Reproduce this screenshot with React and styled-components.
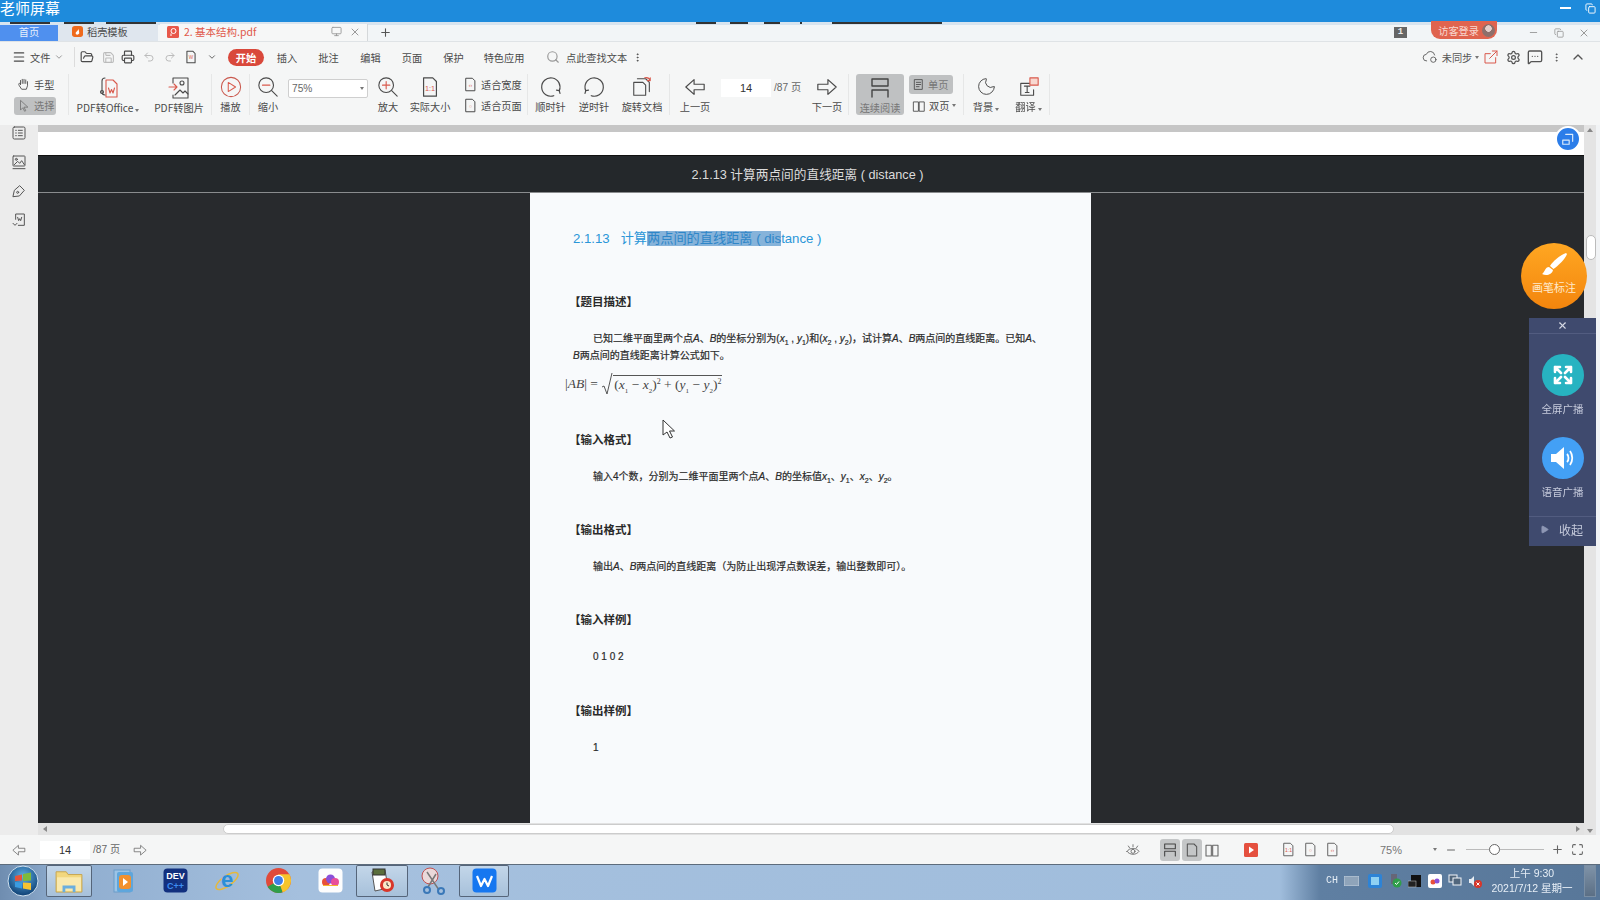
import React from 'react';
import styled, { createGlobalStyle } from 'styled-components';
import {
  Menu, ChevronDown, ChevronUp, FolderOpen, Save, Printer, Undo2, Redo2, Search, Settings,
  MessageSquareMore, MoreVertical, X, Plus, Minus, Monitor, Moon, Play, Maximize, Copy,
} from 'lucide-react';

const GlobalStyle = createGlobalStyle`
  html, body { margin: 0; padding: 0; background: #fff; overflow: hidden; }
  * { box-sizing: border-box; }
`;

const UI_FONT = `"Noto Sans CJK SC", "Liberation Sans", sans-serif`;
const DOC_FONT = `"Liberation Sans", "Noto Sans CJK SC", sans-serif`;

const Root = styled.div`
  position: relative;
  width: 1600px;
  height: 900px;
  overflow: hidden;
  display: flex;
  flex-direction: column;
  font-family: ${UI_FONT};
  color: #4a4a4a;
  font-size: 10.2px;
  filter: blur(0.35px);
`;

const TopBar = styled.div`
  height: 22px;
  background: #1e8bdc;
  color: #fff;
  font-size: 15px;
  line-height: 16px;
  display: flex;
  justify-content: space-between;
  align-items: flex-start;
  padding-right: 4px;
`;

const TopButtons = styled.div`
  display: flex;
  gap: 14px;
  align-items: center;
  height: 16px;
`;

const WinBar = styled.div`
  width: 11px;
  height: 2px;
  background: #fff;
`;

const Strip = styled.div`
  height: 3px;
  background: #d8e4ef;
  display: flex;
`;

const Mark = styled.span`
  margin-left: ${(p) => p.$at}px;
  width: ${(p) => p.$w}px;
  height: 2px;
  background: #333;
`;

const TabRow = styled.div`
  height: 17px;
  background: #f2f5f7;
  border-bottom: 1px solid #dfe3e6;
  display: flex;
  align-items: stretch;
`;

const HomeTab = styled.div`
  width: 58px;
  background: #4f90ef;
  color: #e6effc;
  display: flex;
  align-items: center;
  justify-content: center;
  padding-bottom: 3px;
`;

const TemplateTab = styled.div`
  width: 100px;
  background: #dfe6ee;
  display: flex;
  align-items: center;
  gap: 4px;
  padding: 0 0 3px 14px;
`;

const ActiveTab = styled.div`
  width: 208px;
  margin-left: 2px;
  background: #f6f7f7;
  border-right: 1px solid #d5d8da;
  color: #e0584a;
  display: flex;
  align-items: center;
  padding: 0 6px 2px 7px;
  gap: 5px;
  font-size: 10.5px;
  margin-top: -1px;
`;

const TabIcons = styled.div`
  margin-left: auto;
  display: flex;
  gap: 7px;
  color: #999;
`;

const NewTab = styled.div`
  margin-left: 11px;
  display: flex;
  align-items: center;
  color: #555;
  padding-bottom: 2px;
`;

const TabRight = styled.div`
  margin-left: auto;
  display: flex;
  align-items: center;
  padding-bottom: 1px;
  color: #999;
`;

const CountBadge = styled.span`
  width: 13px;
  height: 11px;
  background: #666;
  color: #eee;
  font: bold 9px/11px "Liberation Mono", monospace;
  text-align: center;
  margin-right: 24px;
`;

const LoginPill = styled.div`
  width: 66px;
  height: 18px;
  margin-top: -5px;
  border-radius: 0 0 9px 9px;
  background: #e0644f;
  color: #f8d8d0;
  display: flex;
  align-items: center;
  justify-content: flex-end;
  gap: 3px;
  padding-right: 2px;
  margin-right: 24px;
`;

const Avatar = styled.span`
  width: 13px;
  height: 13px;
  border-radius: 50%;
  background: radial-gradient(circle at 50% 35%, #e6cfcb 0 3px, #8d6f6b 3.5px);
`;

const WinCtl = styled.span`
  width: ${(p) => p.$w || 25}px;
  display: flex;
  justify-content: center;
`;

const MenuRow = styled.div`
  height: 30px;
  background: #f5f6f6;
  display: flex;
  align-items: center;
  padding-left: 12px;
  padding-right: 10px;
  color: #4a4a4a;
`;

const MenuSlot = styled.div`
  width: ${(p) => p.$w}px;
  flex: none;
  display: flex;
  align-items: center;
  justify-content: ${(p) => p.$start ? 'flex-start' : 'center'};
  gap: ${(p) => p.$gap || 0}px;
  margin-left: ${(p) => p.$ml || 0}px;
  color: ${(p) => p.$muted ? '#bbb' : 'inherit'};
  white-space: nowrap;
`;

const VLine = styled.div`
  width: 1px;
  height: ${(p) => p.$h || 20}px;
  background: #dcdcdc;
  flex: none;
`;

const StartPill = styled.div`
  width: 36px;
  height: 17px;
  background: #d9483b;
  color: #fff;
  border-radius: 9px;
  font-weight: 700;
  display: flex;
  align-items: center;
  justify-content: center;
  flex: none;
  margin: 0 3px 0 5px;
`;

const MenuRight = styled.div`
  margin-left: auto;
  display: flex;
  align-items: center;
  color: #555;
`;

const Toolbar = styled.div`
  height: 53px;
  background: #f5f6f6;
  display: flex;
  align-items: stretch;
  padding: 2px 0 10px;
`;

const Sep = styled.div`
  width: 1px;
  background: #e6e7e7;
  flex: none;
  margin-left: ${(p) => p.$ml || 0}px;
`;

const HandGroup = styled.div`
  width: 68px;
  padding: 1px 0 0 14px;
  display: flex;
  flex-direction: column;
  gap: 3px;
`;

const SmallTool = styled.div`
  width: ${(p) => p.$w || 42}px;
  height: 19px;
  display: flex;
  align-items: center;
  gap: 3px;
  padding-left: 3px;
  border-radius: 3px;
  white-space: nowrap;
  background: ${(p) => p.$on ? '#bfc1c2' : 'transparent'};
  color: ${(p) => p.$on ? '#777' : 'inherit'};
`;

const Tool = styled.div`
  width: ${(p) => p.$w}px;
  flex: none;
  display: flex;
  flex-direction: column;
  align-items: center;
  justify-content: space-between;
  padding: 2px 0 1px;
  white-space: nowrap;
  border-radius: 3px;
  background: ${(p) => p.$on ? '#bfc1c2' : 'transparent'};
  color: ${(p) => p.$on ? '#777' : 'inherit'};
  margin-left: ${(p) => p.$ml || 0}px;
`;

const ZoomSelect = styled.div`
  width: 80px;
  height: 19px;
  margin: 5px 2px 0 2px;
  background: #fff;
  border: 1px solid #cfcfcf;
  border-radius: 2px;
  display: flex;
  align-items: center;
  justify-content: space-between;
  padding: 0 3px;
  font-family: "Liberation Sans", sans-serif;
  flex: none;
  color: #666;
`;

const Caret = styled.span`
  width: 0;
  height: 0;
  border-left: 2.5px solid transparent;
  border-right: 2.5px solid transparent;
  border-top: 3px solid #777;
  display: inline-block;
  margin-left: ${(p) => p.$ml || 0}px;
`;

const FitGroup = styled.div`
  width: 73px;
  flex: none;
  padding: 1px 0 0 6px;
  display: flex;
  flex-direction: column;
  gap: 2px;
`;

const PageBox = styled.div`
  width: 88px;
  padding: 5px 0 0 3px;
  display: flex;
  gap: 3px;
  flex: none;
  align-items: flex-start;
`;

const StatusPageBox = styled(PageBox)`
  width: 84px;
  padding: 0 0 0 2px;
`;

const PageInput = styled.div`
  width: ${(p) => p.$w || 50}px;
  height: 18px;
  background: #fff;
  color: #333;
  font: 11px/18px "Liberation Sans", sans-serif;
  text-align: center;
  flex: none;
`;

const PageTotal = styled.span`
  font-family: "Liberation Sans", "Noto Sans CJK SC", sans-serif;
  line-height: 18px;
  color: #666;
  white-space: nowrap;
`;

const ViewStack = styled.div`
  width: 44px;
  margin-left: 5px;
  display: flex;
  flex-direction: column;
  gap: 2px;
  padding-top: 1px;
  flex: none;
`;

const Viewer = styled.div`
  height: 710px;
  display: flex;
`;

const SideRail = styled.div`
  width: 38px;
  background: #ececec;
  display: flex;
  flex-direction: column;
  align-items: center;
  gap: 13px;
  color: #555;
  flex: none;
`;

const ViewerMain = styled.div`
  flex: 1;
  display: flex;
  flex-direction: column;
  min-width: 0;
`;

const GrayEdge = styled.div`
  height: 7px;
  background: #c6c6c6;
  flex: none;
`;

const WhiteGap = styled.div`
  height: 23px;
  background: #fff;
  flex: none;
`;

const PageHeader = styled.div`
  height: 38px;
  background: #24282b;
  border-top: 1px solid #111;
  border-bottom: 1px solid #8a8c8e;
  color: #dcdcdc;
  font: 12.7px/38px ${DOC_FONT};
  text-align: center;
  flex: none;
  padding-right: 7px;
`;

const PageArea = styled.div`
  flex: 1;
  min-height: 0;
  background: #282a2d;
  display: flex;
  justify-content: center;
  padding-right: 1px;
`;

const PaperSheet = styled.div`
  position: relative;
  width: 561px;
  background: #f8fafc;
  padding: 37px 0 0 43px;
  font: 10px/17px ${DOC_FONT};
  color: #2a2a2a;
`;

const DocTitle = styled.div`
  color: #2a96d8;
  font-size: 13.2px;
  line-height: 18px;
`;

const Selected = styled.span`
  background: rgba(40, 120, 190, 0.55);
  color: #2f86c8;
`;

const DocHeading = styled.div`
  font-weight: 700;
  margin-top: ${(p) => p.$mt}px;
  margin-left: -4px;
  font-size: 11.5px;
`;

const DocPara = styled.div`
  margin-top: ${(p) => p.$mt}px;
  padding-left: ${(p) => p.$indent ? 20 : 0}px;
  -webkit-text-stroke: 0.2px #2a2a2a;
  white-space: nowrap;
`;

const DocFirstLine = styled.span`
  display: inline-block;
  padding-left: 20px;
`;

const Formula = styled.div`
  display: flex;
  align-items: center;
  margin: 6px 0 0 -8px;
  height: 28px;
  font: 13.5px "Liberation Serif", serif;
  color: #444;
  white-space: nowrap;
`;

const Radicand = styled.span`
  border-top: 1px solid #555;
  padding: 1px 1px 0 1px;
  margin-top: -1px;
`;

const Sub = styled.sub`
  font-size: 7px;
  line-height: 0;
`;

const Sup = styled.sup`
  font-size: 8px;
  line-height: 0;
`;

const CursorMark = styled.svg`
  position: absolute;
  left: 132px;
  top: 226px;
`;

const VScroll = styled.div`
  width: 16px;
  background: #e4e4e4;
  border-right: 4px solid #f1f3f5;
  flex: none;
  position: relative;
  display: flex;
  flex-direction: column;
  align-items: center;
  justify-content: space-between;
  padding: 3px 0 2px;
`;

const VThumb = styled.div`
  position: absolute;
  left: 2px;
  top: 110px;
  width: 10px;
  height: 25px;
  background: #fff;
  border: 1px solid #bbb;
  border-radius: 5px;
`;

const HScroll = styled.div`
  height: 12px;
  background: #e2e2e2;
  flex: none;
  display: flex;
  align-items: center;
  padding: 0 4px 0 5px;
`;

const HThumb = styled.div`
  width: 1171px;
  height: 10px;
  margin-left: 176px;
  background: #fff;
  border: 1px solid #ccc;
  border-radius: 5px;
`;

const TinyArrow = styled.span`
  width: 0;
  height: 0;
  border-top: 3px solid transparent;
  border-bottom: 3px solid transparent;
  border-${(p) => p.$left ? 'right' : 'left'}: 4px solid #888;
  margin-left: ${(p) => p.$right ? 'auto' : '0'};
`;

const TinyUp = styled.span`
  width: 0;
  height: 0;
  border-left: 3px solid transparent;
  border-right: 3px solid transparent;
  ${(p) => p.$down ? 'border-top' : 'border-bottom'}: 4px solid #888;
`;

const StatusBar = styled.div`
  height: 29px;
  background: #f5f6f6;
  display: flex;
  align-items: center;
  padding-right: 16px;
  color: #666;
`;

const StatusSlot = styled.div`
  width: ${(p) => p.$w}px;
  flex: none;
  height: 22px;
  border-radius: 3px;
  display: flex;
  align-items: center;
  justify-content: center;
  margin-left: ${(p) => p.$ml || 0}px;
  background: ${(p) => p.$on ? '#c4c6c7' : 'transparent'};
`;

const StatusSpacer = styled.div`
  flex: 1;
`;

const ZoomText = styled.div`
  width: 70px;
  flex: none;
  margin-left: 13px;
  text-align: center;
  font: 11px "Liberation Sans", sans-serif;
  color: #777;
`;

const ZoomTrack = styled.div`
  position: relative;
  width: 78px;
  height: 1px;
  margin-left: 9px;
  background: #bbb;
  flex: none;
`;

const ZoomKnob = styled.span`
  position: absolute;
  left: 23px;
  top: -5px;
  width: 11px;
  height: 11px;
  border-radius: 50%;
  background: #fff;
  border: 1px solid #666;
`;

const Taskbar = styled.div`
  height: 36px;
  border-top: 1px solid #5d6c7c;
  background: linear-gradient(90deg, #6f8db0 0, #8fadcf 60px, #a5c0de 300px, #a0bddc 1280px, #5f7fa2 1320px, #587799 1600px);
  display: flex;
  align-items: center;
  padding-bottom: 4px;
  color: #e6eef6;
`;

const Orb = styled.div`
  width: 46px;
  flex: none;
  display: flex;
  justify-content: center;
`;

const TaskSlot = styled.div`
  width: ${(p) => p.$w || 51.6}px;
  height: 32px;
  flex: none;
  display: flex;
  align-items: center;
  justify-content: center;
  margin-left: ${(p) => p.$ml || 0}px;
  border-radius: 2px;
  background: ${(p) => p.$open ? 'linear-gradient(#c4d7ea, #a6c0da)' : 'transparent'};
  box-shadow: ${(p) => p.$open ? 'inset 0 0 0 1px #55657a' : 'none'};
`;

const Tray = styled.div`
  margin-left: auto;
  display: flex;
  align-items: center;
  gap: 6px;
`;

const ImeLabel = styled.span`
  font: 10px "Liberation Mono", monospace;
`;

const Clock = styled.div`
  width: 88px;
  text-align: center;
  font: 10.5px/15px ${DOC_FONT};
  color: #e6eef6;
  white-space: nowrap;
`;

const ShowDesktop = styled.div`
  width: 12px;
  height: 32px;
  margin: 0 4px 0 2px;
  border: 1px solid #7a8ea3;
  background: linear-gradient(#7f93a8, #5b6f85);
`;

const SwitchBadge = styled.div`
  position: absolute;
  left: 1555px;
  top: 126px;
  width: 26px;
  height: 26px;
  border-radius: 50%;
  background: #2b7de9;
  border: 2px solid #fff;
  display: flex;
  align-items: center;
  justify-content: center;
`;

const BrushButton = styled.div`
  position: absolute;
  left: 1521px;
  top: 243px;
  width: 66px;
  height: 66px;
  border-radius: 50%;
  background: linear-gradient(#ffa722, #f3850d);
  color: #ffe9cc;
  font-size: 11px;
  display: flex;
  flex-direction: column;
  align-items: center;
  padding-top: 9px;
  gap: 1px;
`;

const BroadcastPanel = styled.div`
  position: absolute;
  left: 1529px;
  top: 318px;
  width: 67px;
  height: 228px;
  background: #3f4a6e;
  color: #c6cbdc;
  font-size: 10.5px;
  display: flex;
  flex-direction: column;
  align-items: center;
`;

const PanelClose = styled.div`
  height: 16px;
  width: 100%;
  display: flex;
  align-items: center;
  justify-content: center;
  border-bottom: 1px solid #525c80;
  color: #d6d9e4;
`;

const RoundAction = styled.div`
  width: 42px;
  height: 42px;
  border-radius: 50%;
  background: ${(p) => p.$color};
  margin-top: ${(p) => p.$mt}px;
  display: flex;
  align-items: center;
  justify-content: center;
`;

const ActionLabel = styled.div`
  margin-top: 5px;
  line-height: 16px;
`;

const PanelFold = styled.div`
  margin-top: auto;
  width: 100%;
  height: 30px;
  border-top: 1px solid #525c80;
  display: flex;
  align-items: center;
  gap: 10px;
  padding: 0 0 4px 11px;
  font-size: 12px;
`;

// line icon drawn on a 24 grid, scaled by size
const Ico = ({ size = 20, sw = 1.5, children, color = 'currentColor' }) => (
  <svg width={size} height={size} viewBox="0 0 24 24" fill="none" stroke={color} strokeWidth={sw} strokeLinejoin="round" strokeLinecap="round" style={{ flex: 'none' }}>
    {children}
  </svg>
);

const ArrowOutline = ({ dir, size = 22 }) => (
  <Ico size={size} sw={1.3}>
    <path d={dir === 'left' ? 'M2 12 11 4v5h11v6H11v5z' : 'M22 12 13 4v5H2v6h11v5z'} />
  </Ico>
);

const RotateIcon = ({ ccw }) => (
  <Ico size={22} sw={1.3}>
    <g transform={ccw ? 'matrix(-1 0 0 1 24 0)' : undefined}>
      <path d="M15 21.5A10 10 0 1 1 21 16" />
      <path d="M18 15.5l3 .5.8 3" />
    </g>
  </Ico>
);

const DocIcon = ({ label, size = 20, accent = '#d9594c', sw = 1.3 }) => (
  <Ico size={size} sw={sw}>
    <path d="M5 2h10l4 4v16H5z" />
    <text x="12" y="16" fontSize="8" fill={accent} stroke="none" textAnchor="middle" fontFamily="Liberation Sans">{label}</text>
  </Ico>
);

const LogoSquare = ({ bg, children }) => (
  <svg width="25" height="25" viewBox="0 0 25 25">
    <rect x="0.5" y="0.5" width="24" height="24" rx="4" fill={bg} />
    {children}
  </svg>
);

const ViewerIcons = () => (
  <SideRail>
    <Ico size={16} sw={1.5}><rect x="3" y="3" width="18" height="18" rx="2" /><path d="M7 8h1M11 8h6M7 12h1M11 12h6M7 16h1M11 16h6" /></Ico>
    <Ico size={16} sw={1.5}><rect x="3" y="3" width="18" height="15" rx="1" /><path d="M5 16l5-5 3 3 3-4 4 6M3 22h18" /><circle cx="8" cy="8" r="1.5" /></Ico>
    <Ico size={16} sw={1.5}><path d="M3 20l2-9 8-7 7 7-7 8z" /><circle cx="10" cy="14" r="1.5" /></Ico>
    <Ico size={16} sw={1.5}><path d="M7 11V3h13v17H11" /><path d="M3 17l3 3 3-3" /><path d="M10 8l1.5 5L13 10l1.5 3L16 8" /></Ico>
  </SideRail>
);

const Paper = () => (
  <PaperSheet>
    <DocTitle>
      2.1.13&nbsp;&nbsp;&nbsp;计算<Selected>两点间的直线距离 ( dis</Selected>tance )
    </DocTitle>
    <DocHeading $mt={46}>【题目描述】</DocHeading>
    <DocPara $mt={19}>
      <DocFirstLine>
        已知二维平面里两个点<i>A</i>、<i>B</i>的坐标分别为(<i>x</i><Sub>1</Sub> , <i>y</i><Sub>1</Sub>)和(<i>x</i><Sub>2</Sub> , <i>y</i><Sub>2</Sub>)，试计算<i>A</i>、<i>B</i>两点间的直线距离。已知<i>A</i>、
      </DocFirstLine>
      <br />
      <i>B</i>两点间的直线距离计算公式如下。
    </DocPara>
    <Formula>
      |<i>AB</i>| =&nbsp;
      <svg width="12" height="24" viewBox="0 0 12 24" fill="none" stroke="#555"><path d="M1 15l2-1 3 8 5-21" /></svg>
      <Radicand>
        (<i>x</i><Sub>1</Sub> − <i>x</i><Sub>2</Sub>)<Sup>2</Sup> + (<i>y</i><Sub>1</Sub> − <i>y</i><Sub>2</Sub>)<Sup>2</Sup>
      </Radicand>
    </Formula>
    <DocHeading $mt={34}>【输入格式】</DocHeading>
    <DocPara $mt={19} $indent>
      输入4个数，分别为二维平面里两个点<i>A</i>、<i>B</i>的坐标值<i>x</i><Sub>1</Sub>、<i>y</i><Sub>1</Sub>、<i>x</i><Sub>2</Sub>、<i>y</i><Sub>2</Sub>。
    </DocPara>
    <DocHeading $mt={37}>【输出格式】</DocHeading>
    <DocPara $mt={19} $indent>
      输出<i>A</i>、<i>B</i>两点间的直线距离（为防止出现浮点数误差，输出整数即可）。
    </DocPara>
    <DocHeading $mt={37}>【输入样例】</DocHeading>
    <DocPara $mt={19} $indent>0 1 0 2</DocPara>
    <DocHeading $mt={38}>【输出样例】</DocHeading>
    <DocPara $mt={19} $indent>1</DocPara>
    <CursorMark width="14" height="20" viewBox="0 0 14 20">
      <path d="M1 1v15l4-3 3 6 2.500-1-3-6h5z" fill="#fff" stroke="#333" strokeWidth="1" strokeLinejoin="round" />
    </CursorMark>
  </PaperSheet>
);

const App = () => (
  <>
    <GlobalStyle />
    <Root>
      <TopBar>
        <span>老师屏幕</span>
        <TopButtons>
          <WinBar />
          <Copy size={11} color="#fff" strokeWidth={2} />
        </TopButtons>
      </TopBar>
      <Strip>
        <Mark $at={10} $w={40} />
        <Mark $at={14} $w={30} />
        <Mark $at={12} $w={50} />
        <Mark $at={540} $w={20} />
        <Mark $at={14} $w={18} />
        <Mark $at={16} $w={16} />
        <Mark $at={20} $w={2} />
        <Mark $at={30} $w={110} />
      </Strip>
      <TabRow>
        <HomeTab>首页</HomeTab>
        <TemplateTab>
          <svg width="11" height="11" viewBox="0 0 12 12"><rect width="12" height="12" rx="3" fill="#ef6a1c" /><path d="M7 2C8 5 4 6 4 8c0 2 3 2 4 0" fill="#fff" /></svg>
          稻壳模板
        </TemplateTab>
        <ActiveTab>
          <svg width="12" height="12" viewBox="0 0 12 12"><rect width="12" height="12" rx="1.500" fill="#e8584a" /><circle cx="6.500" cy="5" r="2.500" fill="none" stroke="#fff" /><path d="M4 7.500V10" stroke="#fff" /></svg>
          2. 基本结构.pdf
          <TabIcons>
            <Monitor size={11} />
            <X size={12} />
          </TabIcons>
        </ActiveTab>
        <NewTab><Plus size={13} /></NewTab>
        <TabRight>
          <CountBadge>1</CountBadge>
          <LoginPill>访客登录<Avatar /></LoginPill>
          <WinCtl><Minus size={11} /></WinCtl>
          <WinCtl><Copy size={10} /></WinCtl>
          <WinCtl><X size={12} /></WinCtl>
          <WinCtl $w={4} />
        </TabRight>
      </TabRow>
      <MenuRow>
        <MenuSlot $w={18} $start><Menu size={14} /></MenuSlot>
        <MenuSlot $w={44} $start $gap={4}>文件<ChevronDown size={10} color="#888" /></MenuSlot>
        <VLine />
        <MenuSlot $w={24}><FolderOpen size={14} /></MenuSlot>
        <MenuSlot $w={18} $muted><Save size={13} /></MenuSlot>
        <MenuSlot $w={22}><Printer size={14} /></MenuSlot>
        <MenuSlot $w={20} $muted><Undo2 size={12} /></MenuSlot>
        <MenuSlot $w={22} $muted><Redo2 size={12} /></MenuSlot>
        <MenuSlot $w={20}><DocIcon label="W" size={14} sw={1.8} /></MenuSlot>
        <MenuSlot $w={22}><ChevronDown size={10} /></MenuSlot>
        <StartPill>开始</StartPill>
        <MenuSlot $w={40}>插入</MenuSlot>
        <MenuSlot $w={43}>批注</MenuSlot>
        <MenuSlot $w={41}>编辑</MenuSlot>
        <MenuSlot $w={42}>页面</MenuSlot>
        <MenuSlot $w={41}>保护</MenuSlot>
        <MenuSlot $w={60}>特色应用</MenuSlot>
        <MenuSlot $w={26} $ml={6}><Search size={14} color="#999" /></MenuSlot>
        <MenuSlot $w={66} $start>点此查找文本</MenuSlot>
        <MoreVertical size={11} />
        <MenuRight>
          <MenuSlot $w={20}>
            <Ico size={16} sw={1.3}><path d="M7 18a5 5 0 0 1-.5-10A6.500 6.500 0 0 1 19 9" /><circle cx="17" cy="16" r="4" /></Ico>
          </MenuSlot>
          <MenuSlot $w={34}>未同步</MenuSlot>
          <MenuSlot $w={6}><Caret /></MenuSlot>
          <MenuSlot $w={22}>
            <Ico size={16} sw={1.5} color="#d9594c"><path d="M19 13v8H3V7h8M14 3h7v7M21 3L10 14" /></Ico>
          </MenuSlot>
          <MenuSlot $w={22}><Settings size={15} /></MenuSlot>
          <MenuSlot $w={22}><MessageSquareMore size={16} /></MenuSlot>
          <MenuSlot $w={20}><MoreVertical size={11} /></MenuSlot>
          <MenuSlot $w={24}><ChevronUp size={16} /></MenuSlot>
        </MenuRight>
      </MenuRow>
      <Toolbar>
        <HandGroup>
          <SmallTool>
            <Ico size={14}><path d="M6 13V6M9 11V4M12 11V4M15 11V5M18 14V8M6 12c-3-3-4 0-2 3l4 6h8l2-6" /></Ico>
            手型
          </SmallTool>
          <SmallTool $on>
            <Ico size={14}><path d="M6 3v16l4-4 3 6 2-1-3-6h6z" /></Ico>
            选择
          </SmallTool>
        </HandGroup>
        <Sep />
        <Tool $w={78}>
          <Ico size={24} sw={1.1}><path d="M10 4h7l4 4v13H10z" stroke="#d9594c" /><path d="M12.500 12l1.500 5 1.500-3.500L17 17l1.500-5" stroke="#d9594c" /><path d="M9 2a3 3 0 0 0-3 3v11a3 3 0 0 0 3 3" /><circle cx="6" cy="16" r="1.500" /></Ico>
          <span>PDF转Office<Caret $ml={2} /></span>
        </Tool>
        <Tool $w={64}>
          <Ico size={24} sw={1.1}><path d="M6 7V2h15v20H6v-3" /><path d="M2 11h8M7 8l3 3-3 3" stroke="#d9594c" /><path d="M8 19l5-5 3 3 2-2 3 3" /><circle cx="15" cy="7" r="2" /></Ico>
          <span>PDF转图片</span>
        </Tool>
        <Sep />
        <Tool $w={37}>
          <Ico size={22} sw={1.1}><circle cx="12" cy="12" r="10.500" stroke="#c9574c" /><path d="M9 7l8 5-8 5z" stroke="#d9594c" /></Ico>
          <span>播放</span>
        </Tool>
        <Sep />
        <Tool $w={36}>
          <Ico size={22} sw={1.2}><circle cx="10" cy="10" r="8" /><path d="M16 16l6 6" /><path d="M6 10h8" stroke="#d9594c" /></Ico>
          <span>缩小</span>
        </Tool>
        <ZoomSelect><span>75%</span><Caret /></ZoomSelect>
        <Tool $w={36}>
          <Ico size={22} sw={1.2}><circle cx="10" cy="10" r="8" /><path d="M16 16l6 6" /><path d="M6 10h8M10 6v8" stroke="#d9594c" /></Ico>
          <span>放大</span>
        </Tool>
        <Tool $w={48}>
          <DocIcon label="1:1" size={22} />
          <span>实际大小</span>
        </Tool>
        <FitGroup>
          <SmallTool $w={62}><DocIcon label="‹›" size={15} sw={1.6} />适合宽度</SmallTool>
          <SmallTool $w={62}><DocIcon label="○" size={15} sw={1.6} />适合页面</SmallTool>
        </FitGroup>
        <Sep />
        <Tool $w={45}>
          <RotateIcon />
          <span>顺时针</span>
        </Tool>
        <Tool $w={42}>
          <RotateIcon ccw />
          <span>逆时针</span>
        </Tool>
        <Tool $w={54}>
          <Ico size={22} sw={1.2}><path d="M3 7h10l3 3v11H3z" /><path d="M7 3h9l4 4v10" /><path d="M15 2a5 5 0 0 1 6 3M21 2v3h-3" stroke="#d9594c" /></Ico>
          <span>旋转文档</span>
        </Tool>
        <Sep />
        <Tool $w={46} $ml={2}>
          <ArrowOutline dir="left" />
          <span>上一页</span>
        </Tool>
        <PageBox>
          <PageInput>14</PageInput>
          <PageTotal>/87 页</PageTotal>
        </PageBox>
        <Tool $w={42}>
          <ArrowOutline dir="right" />
          <span>下一页</span>
        </Tool>
        <Sep />
        <Tool $w={48} $on $ml={7}>
          <Ico size={24} sw={1.4} color="#444"><path d="M4 3h16v7H4zM4 21v-7h16v7" /></Ico>
          <span>连续阅读</span>
        </Tool>
        <ViewStack>
          <SmallTool $w={44} $on>
            <Ico size={13} color="#444"><path d="M5 3h14v18H5zM8 8h8M8 12h8M8 16h5" /></Ico>
            单页
          </SmallTool>
          <SmallTool $w={48}>
            <Ico size={14}><path d="M3 5h8v16H3zM13 5h8v16h-8z" /></Ico>
            双页<Caret />
          </SmallTool>
        </ViewStack>
        <Sep $ml={10} />
        <Tool $w={44}>
          <Moon size={21} strokeWidth={1.1} />
          <span>背景<Caret $ml={2} /></span>
        </Tool>
        <Tool $w={41}>
          <Ico size={22} sw={1.2}><path d="M15 8H3v13h14v-6" /><path d="M7 11h6M10 11v7M8 18h4" /><rect x="13" y="2" width="9" height="8" stroke="#d9594c" fill="#f8d8d0" /></Ico>
          <span>翻译<Caret $ml={2} /></span>
        </Tool>
        <Sep />
      </Toolbar>
      <Viewer>
        <ViewerIcons />
        <ViewerMain>
          <GrayEdge />
          <WhiteGap />
          <PageHeader>2.1.13 计算两点间的直线距离 ( distance )</PageHeader>
          <PageArea>
            <Paper />
          </PageArea>
          <HScroll>
            <TinyArrow $left />
            <HThumb />
            <TinyArrow $right />
          </HScroll>
        </ViewerMain>
        <VScroll>
          <TinyUp />
          <VThumb />
          <TinyUp $down />
        </VScroll>
      </Viewer>
      <StatusBar>
        <StatusSlot $w={38}><ArrowOutline dir="left" size={14} /></StatusSlot>
        <StatusPageBox>
          <PageInput>14</PageInput>
          <PageTotal>/87 页</PageTotal>
        </StatusPageBox>
        <StatusSlot $w={36}><ArrowOutline dir="right" size={14} /></StatusSlot>
        <StatusSpacer />
        <StatusSlot $w={29}>
          <Ico size={16} sw={1.3}><path d="M3 14c4-6 14-6 18 0-4 6-14 6-18 0z" /><circle cx="12" cy="14" r="3" /><path d="M5 6l2 3M19 6l-2 3M12 4v3" /></Ico>
        </StatusSlot>
        <StatusSlot $w={20} $on $ml={13}><Ico size={16} sw={1.6} color="#444"><path d="M4 3h16v7H4zM4 21v-7h16v7" /></Ico></StatusSlot>
        <StatusSlot $w={20} $on $ml={2}><Ico size={16} sw={1.6} color="#555"><path d="M5 3h10l4 4v14H5z" /></Ico></StatusSlot>
        <StatusSlot $w={20}><Ico size={16} sw={1.6}><path d="M3 5h8v16H3zM13 5h8v16h-8z" /></Ico></StatusSlot>
        <StatusSlot $w={38} $ml={10}>
          <svg width="14" height="14" viewBox="0 0 14 14"><rect width="14" height="14" rx="1.500" fill="#e5503f" /><path d="M5 3.500l5 3.500-5 3.500z" fill="#fff" /></svg>
        </StatusSlot>
        <StatusSlot $w={22} $ml={7}><DocIcon label="1:1" size={15} sw={1.6} /></StatusSlot>
        <StatusSlot $w={22}><DocIcon label="○" size={15} sw={1.6} /></StatusSlot>
        <StatusSlot $w={22}><DocIcon label="‹›" size={15} sw={1.6} /></StatusSlot>
        <ZoomText>75%</ZoomText>
        <StatusSlot $w={20} $ml={-1}><Caret /></StatusSlot>
        <StatusSlot $w={12}><Minus size={12} /></StatusSlot>
        <ZoomTrack><ZoomKnob /></ZoomTrack>
        <StatusSlot $w={26}><Plus size={13} /></StatusSlot>
        <StatusSlot $w={14}><Maximize size={13} /></StatusSlot>
      </StatusBar>
      <Taskbar>
        <Orb>
          <svg width="32" height="32" viewBox="0 0 32 32">
            <defs>
              <radialGradient id="orb" cx="50%" cy="35%" r="65%">
                <stop offset="0" stopColor="#5fb0e6" />
                <stop offset="1" stopColor="#0e3f73" />
              </radialGradient>
            </defs>
            <circle cx="16" cy="16" r="15" fill="url(#orb)" stroke="#cfe0ee" />
            <path d="M8 11l7-1.500v6L8 16z" fill="#e5543b" />
            <path d="M16 9l8-1.500v8l-8 .5z" fill="#7dba3c" />
            <path d="M8 17l7 .5v6L8 22z" fill="#3a9be0" />
            <path d="M16 17.500l8 .5v7l-8-1.500z" fill="#f6c32f" />
          </svg>
        </Orb>
        <TaskSlot $w={46} $open>
          <svg width="28" height="24" viewBox="0 0 30 26">
            <path d="M1 3h11l2 3h15v19H1z" fill="#f2d77e" stroke="#c4a24c" />
            <path d="M2 9h26v15H2z" fill="#f9e9ae" />
            <path d="M8 25v-7h14v7h-3v-4h-8v4z" fill="#6aaede" />
          </svg>
        </TaskSlot>
        <TaskSlot $ml={6}>
          <svg width="24" height="26" viewBox="0 0 24 26">
            <rect x="2" y="2" width="16" height="22" fill="#9cc4e6" stroke="#6a9cc8" />
            <rect x="5" y="4" width="16" height="20" rx="2" fill="#5ea6dc" />
            <rect x="7" y="7" width="12" height="14" rx="3" fill="#f2912e" />
            <path d="M11 10l5 4-5 4z" fill="#fff" />
          </svg>
        </TaskSlot>
        <TaskSlot>
          <LogoSquare bg="#12307e">
            <text x="12.500" y="11" fontSize="9" fontWeight="700" fill="#fff" textAnchor="middle" fontFamily="Liberation Sans">DEV</text>
            <text x="12.500" y="21" fontSize="9" fontWeight="700" fill="#3d8df0" textAnchor="middle" fontFamily="Liberation Sans">C++</text>
          </LogoSquare>
        </TaskSlot>
        <TaskSlot>
          <svg width="26" height="26" viewBox="0 0 26 26">
            <ellipse cx="13" cy="13" rx="13" ry="5" fill="none" stroke="#e5b93c" strokeWidth="1.500" transform="rotate(-35 13 13)" />
            <text x="13" y="19" fontSize="22" fontWeight="700" fill="#2a8fd8" textAnchor="middle" fontFamily="Liberation Sans">e</text>
          </svg>
        </TaskSlot>
        <TaskSlot>
          <svg width="25" height="25" viewBox="0 0 24 24">
            <circle cx="12" cy="12" r="12" fill="#e04a3a" />
            <path d="M12 12L1.600 18A12 12 0 0 0 16 23.300z" fill="#2f9e4a" />
            <path d="M12 12l4 11.300A12 12 0 0 0 22.400 6H12z" fill="#f6c52c" />
            <circle cx="12" cy="12" r="5.500" fill="#fff" />
            <circle cx="12" cy="12" r="4.300" fill="#3f7fe8" />
          </svg>
        </TaskSlot>
        <TaskSlot>
          <LogoSquare bg="#fdfdfd">
            <circle cx="8" cy="14" r="4" fill="#e8503a" />
            <circle cx="12.500" cy="11" r="4.500" fill="#8a4fd8" />
            <circle cx="17" cy="14" r="4" fill="#e84f9a" />
            <path d="M5 17h15v1H5z" fill="#f6b42c" />
          </LogoSquare>
        </TaskSlot>
        <TaskSlot $open>
          <svg width="28" height="28" viewBox="0 0 28 28">
            <path d="M4 5l13-2 3 18-13 3z" fill="#fff" stroke="#555" />
            <rect x="5" y="2" width="12" height="6" fill="#5a6e3c" stroke="#333" />
            <circle cx="19" cy="18" r="7" fill="#d8362a" />
            <circle cx="19" cy="18" r="4" fill="#fbe9c8" />
            <path d="M19 15.500V18l2 1" stroke="#333" fill="none" />
          </svg>
        </TaskSlot>
        <TaskSlot>
          <svg width="26" height="28" viewBox="0 0 26 28" fill="none">
            <circle cx="10" cy="9" r="8" fill="#ead9da" stroke="#c05050" />
            <path d="M7 5l12 18M16 7L8 20" stroke="#777" strokeWidth="1.500" />
            <circle cx="21" cy="24" r="3" stroke="#3a78b8" strokeWidth="2" />
            <circle cx="7" cy="23" r="3" stroke="#3a78b8" strokeWidth="2" />
          </svg>
        </TaskSlot>
        <TaskSlot $w={50} $open>
          <LogoSquare bg="#1677f0">
            <path d="M5 8l4 10 3.500-7 3.500 7 4-10" fill="none" stroke="#fff" strokeWidth="2.200" strokeLinejoin="round" />
          </LogoSquare>
        </TaskSlot>
        <Tray>
          <ImeLabel>CH</ImeLabel>
          <svg width="15" height="10" viewBox="0 0 15 10"><rect width="15" height="10" rx="1.500" fill="#8fa4ba" stroke="#c4d2e0" /></svg>
          <svg width="14" height="14" viewBox="0 0 14 14" style={{ marginLeft: 3 }}><rect width="14" height="14" rx="2" fill="#2d83d6" /><rect x="3" y="3" width="8" height="8" fill="#8fd0f2" /></svg>
          <svg width="14" height="14" viewBox="0 0 14 14"><rect x="3" y="0" width="6" height="10" fill="#667" /><circle cx="9" cy="9" r="4.500" fill="#2f9e4a" /><path d="M7 9l1.500 1.500L11 7.500" stroke="#fff" fill="none" /></svg>
          <svg width="14" height="14" viewBox="0 0 14 14"><rect x="3" y="1" width="10" height="12" fill="#111" /><rect y="7" width="8" height="6" fill="#222" stroke="#ccc" strokeWidth=".5" /></svg>
          <svg width="14" height="14" viewBox="0 0 14 14"><rect width="14" height="14" rx="2" fill="#fff" /><circle cx="5" cy="8" r="2.500" fill="#e8503a" /><circle cx="9" cy="7" r="2.500" fill="#8a4fd8" /></svg>
          <svg width="14" height="14" viewBox="0 0 14 14" fill="none" stroke="#f3f6f9"><rect x="1" y="1" width="8" height="7" fill="#51667c" /><rect x="5" y="4" width="8" height="7" fill="#51667c" /></svg>
          <svg width="14" height="14" viewBox="0 0 14 14"><path d="M1 5h2l3-3v10L3 9H1z" fill="#e8eef4" /><circle cx="10" cy="10" r="4" fill="#d8362a" /><path d="M8.500 8.500l3 3M11.500 8.500l-3 3" stroke="#fff" /></svg>
          <Clock>
            上午 9:30<br />
            2021/7/12 星期一
          </Clock>
          <ShowDesktop />
        </Tray>
      </Taskbar>
      <SwitchBadge>
        <Ico size={14} sw={2} color="#dcebfb"><path d="M8 4h12v12M3 14h11v7H3z" /></Ico>
      </SwitchBadge>
      <BrushButton>
        <svg width="28" height="26" viewBox="0 0 28 26" fill="#fff">
          <path d="M26 1C20 3 13 9 10 14l3.500 3C19 13 25 7 27 2z" />
          <path d="M9 15c-4 0-4 5-7 7 4 2 10 1 11-4z" />
        </svg>
        <span>画笔标注</span>
      </BrushButton>
      <BroadcastPanel>
        <PanelClose><X size={11} strokeWidth={2.4} /></PanelClose>
        <RoundAction $color="#27b3c1" $mt={20}>
          <Ico size={24} sw={2.6} color="#fff"><path d="M4 4l6 6M4 4h5M4 4v5M20 4l-6 6M20 4h-5M20 4v5M4 20l6-6M4 20h5M4 20v-5M20 20l-6-6M20 20h-5M20 20v-5" /></Ico>
        </RoundAction>
        <ActionLabel>全屏广播</ActionLabel>
        <RoundAction $color="#43a0f5" $mt={20}>
          <svg width="26" height="24" viewBox="0 0 26 24" fill="#fff">
            <path d="M1 8h5l8-7v22l-8-7H1z" />
            <path d="M17 8c2 2 2 6 0 8M20 5c3 4 3 10 0 14" fill="none" stroke="#fff" strokeWidth="1.800" />
          </svg>
        </RoundAction>
        <ActionLabel>语音广播</ActionLabel>
        <PanelFold>
          <Play size={9} fill="#8e97b4" stroke="#8e97b4" />
          收起
        </PanelFold>
      </BroadcastPanel>
    </Root>
  </>
);

export default App;
